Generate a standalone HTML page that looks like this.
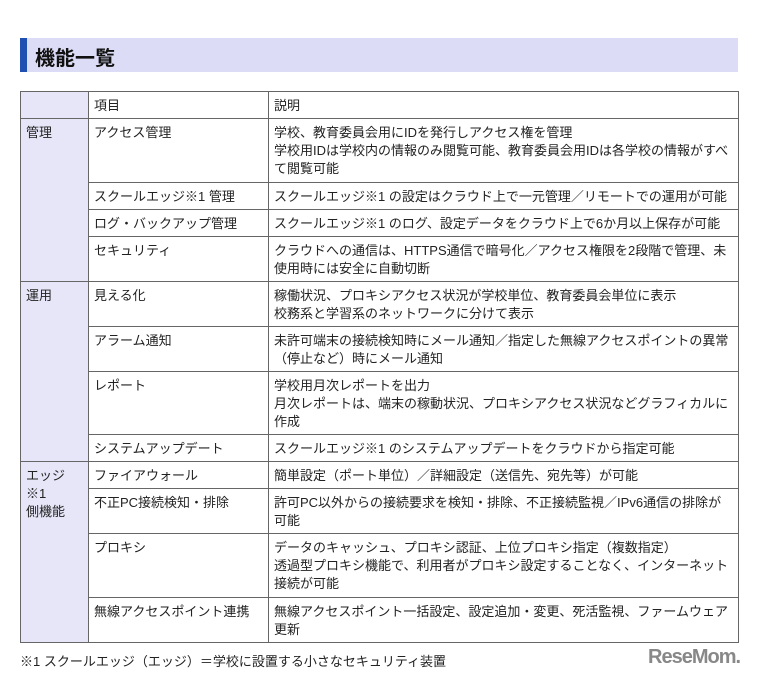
<!DOCTYPE html>
<html><head><meta charset="utf-8"><style>
body{margin:0;background:#fff;width:760px;height:681px;overflow:hidden;font-family:"Liberation Sans","Noto Sans CJK JP",sans-serif;color:#222;}
.hd{position:absolute;left:20px;top:38px;width:718px;height:34px;background:#dcdcf6;}
.hd .bar{position:absolute;left:0;top:0;width:7px;height:34px;background:#1f4fb0;}
.hd span{position:absolute;left:15px;top:4px;font-size:20px;font-weight:bold;color:#111;}
table{position:absolute;left:20px;top:91px;width:719px;border-collapse:collapse;font-size:13px;line-height:18px;table-layout:fixed;}
td{border:1px solid #666;vertical-align:top;padding:5px 5px 3px 5px;}
td.g{background:#e6e6f8;}
.fn{position:absolute;left:20px;top:651px;font-size:13px;}
.logo{position:absolute;left:648px;top:646px;font-size:20px;font-weight:bold;color:#888;letter-spacing:-1px;}
</style></head><body>
<div class="hd"><div class="bar"></div><span>機能一覧</span></div>
<table>
<colgroup><col style="width:68px"><col style="width:180px"><col></colgroup>
<tr style="height:27px"><td class="g"></td><td>項目</td><td>説明</td></tr>
<tr style="height:64px"><td class="g" rowspan="4">管理</td><td>アクセス管理</td><td>学校、教育委員会用にIDを発行しアクセス権を管理<br>学校用IDは学校内の情報のみ閲覧可能、教育委員会用IDは各学校の情報がすべて閲覧可能</td></tr>
<tr style="height:27px"><td>スクールエッジ※1 管理</td><td>スクールエッジ※1 の設定はクラウド上で一元管理／リモートでの運用が可能</td></tr>
<tr style="height:27px"><td>ログ・バックアップ管理</td><td>スクールエッジ※1 のログ、設定データをクラウド上で6か月以上保存が可能</td></tr>
<tr style="height:45px"><td>セキュリティ</td><td>クラウドへの通信は、HTTPS通信で暗号化／アクセス権限を2段階で管理、未使用時には安全に自動切断</td></tr>
<tr style="height:45px"><td class="g" rowspan="4">運用</td><td>見える化</td><td>稼働状況、プロキシアクセス状況が学校単位、教育委員会単位に表示<br>校務系と学習系のネットワークに分けて表示</td></tr>
<tr style="height:45px"><td>アラーム通知</td><td>未許可端末の接続検知時にメール通知／指定した無線アクセスポイントの異常（停止など）時にメール通知</td></tr>
<tr style="height:63px"><td>レポート</td><td>学校用月次レポートを出力<br>月次レポートは、端末の稼動状況、プロキシアクセス状況などグラフィカルに作成</td></tr>
<tr style="height:27px"><td>システムアップデート</td><td>スクールエッジ※1 のシステムアップデートをクラウドから指定可能</td></tr>
<tr style="height:26px"><td class="g" rowspan="4">エッジ<br>※1<br>側機能</td><td>ファイアウォール</td><td>簡単設定（ポート単位）／詳細設定（送信先、宛先等）が可能</td></tr>
<tr style="height:45px"><td>不正PC接続検知・排除</td><td>許可PC以外からの接続要求を検知・排除、不正接続監視／IPv6通信の排除が可能</td></tr>
<tr style="height:64px"><td>プロキシ</td><td>データのキャッシュ、プロキシ認証、上位プロキシ指定（複数指定）<br>透過型プロキシ機能で、利用者がプロキシ設定することなく、インターネット接続が可能</td></tr>
<tr style="height:45px"><td>無線アクセスポイント連携</td><td>無線アクセスポイント一括設定、設定追加・変更、死活監視、ファームウェア更新</td></tr>
</table>
<div class="fn">※1 スクールエッジ（エッジ）＝学校に設置する小さなセキュリティ装置</div>
<div class="logo">ReseMom.</div>
</body></html>
